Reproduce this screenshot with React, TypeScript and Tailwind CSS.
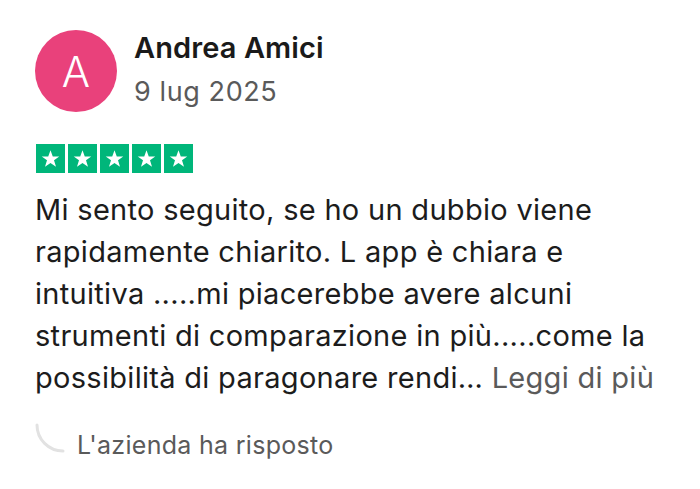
const font = { fontFamily: "Inter, 'Noto Sans', sans-serif" };

const lines = [
  "Mi sento seguito, se ho un dubbio viene",
  "rapidamente chiarito. L app è chiara e",
  "intuitiva .....mi piacerebbe avere alcuni",
  "strumenti di comparazione in più.....come la",
];

function Star() {
  return (
    <div className="flex h-[29px] w-[29px] items-center justify-center bg-[#00b67a]">
      <svg viewBox="0 0 24 24" className="h-[21px] w-[21px]" fill="#fff">
        <path d="M12 2.5l2.6 7.1h7.4l-6 4.5 2.3 7.4L12 17l-6.3 4.5L8 14.1 2 9.6h7.4z" />
      </svg>
    </div>
  );
}

export default function App() {
  return (
    <div className="h-[489px] w-[700px] bg-white pl-[35px] pt-[30px]" style={font}>
      {/* header */}
      <div className="flex items-start gap-[17px]">
        <div className="flex h-[82px] w-[82px] items-center justify-center rounded-full bg-[#e9417b] text-[42px] font-light text-white">
          A
        </div>
        <div className="flex flex-col">
          <span className="mt-px text-[29px] font-semibold leading-[34px] tracking-[0.1px] text-[#1a1a1a]">
            Andrea Amici
          </span>
          <span className="mt-[12px] text-[27px] leading-[30px] tracking-[0.6px] text-[#5a5a5a]">
            9 lug 2025
          </span>
        </div>
      </div>

      {/* stars */}
      <div className="mt-[32px] flex gap-[3px] pl-px">
        {[0, 1, 2, 3, 4].map((i) => (
          <Star key={i} />
        ))}
      </div>

      {/* body */}
      <p className="mt-[16px] whitespace-nowrap text-[29px] leading-[42px] tracking-[0.3px] text-[#1c1c1c]">
        {lines.map((l) => (
          <span key={l} className="block">
            {l}
          </span>
        ))}
        <span className="block">
          possibilità di paragonare rendi… <span className="text-[#5a5a5a]">Leggi di più</span>
        </span>
      </p>

      {/* reply */}
      <div className="mt-[24px] flex items-start gap-[12px]">
        <svg width="30" height="30" viewBox="0 0 30 30" fill="none">
          <path d="M2 2 A 26 26 0 0 0 28 28" stroke="#e2e2e2" strokeWidth="3" strokeLinecap="round" />
        </svg>
        <span className="mt-[7px] text-[25px] leading-[30px] tracking-[0.3px] text-[#5a5a5a]">
          L'azienda ha risposto
        </span>
      </div>
    </div>
  );
}
